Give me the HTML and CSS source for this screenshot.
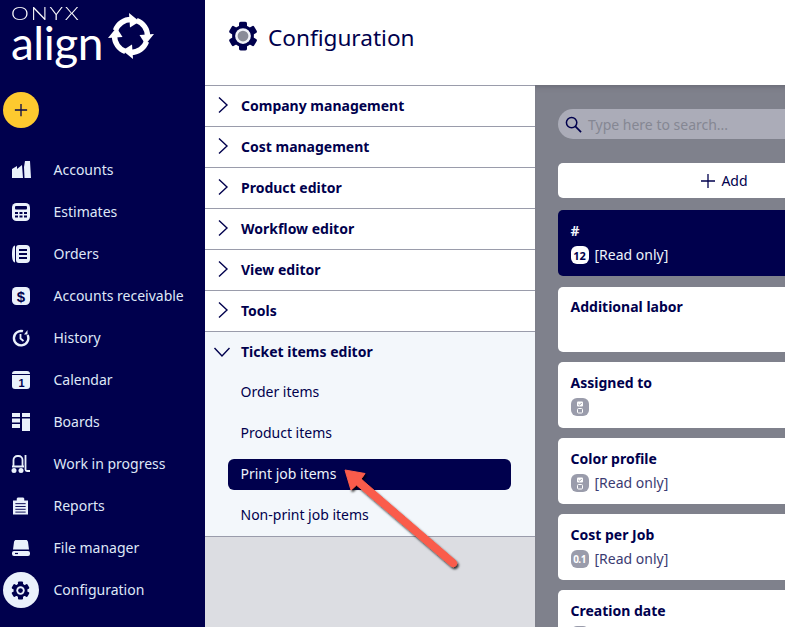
FILE: index.html
```html
<!DOCTYPE html>
<html lang="en">
<head>
<meta charset="utf-8">
<title>Configuration</title>
<link rel="stylesheet" href="styles.css">
</head>
<body>
<svg class="defs" width="0" height="0" aria-hidden="true">
  <defs>
    <g id="gear-body">
      <circle cx="12" cy="12" r="8.700"/>
      <rect x="8.800" y="0.500" width="6.400" height="6" rx="1.300"/>
      <rect x="8.800" y="0.500" width="6.400" height="6" rx="1.300" transform="rotate(60 12 12)"/>
      <rect x="8.800" y="0.500" width="6.400" height="6" rx="1.300" transform="rotate(120 12 12)"/>
      <rect x="8.800" y="0.500" width="6.400" height="6" rx="1.300" transform="rotate(180 12 12)"/>
      <rect x="8.800" y="0.500" width="6.400" height="6" rx="1.300" transform="rotate(240 12 12)"/>
      <rect x="8.800" y="0.500" width="6.400" height="6" rx="1.300" transform="rotate(300 12 12)"/>
    </g>
    <g id="ring-seg">
      <path d="M7.500 17.360A16.500 16.500 0 0 1 23 6.500" fill="none" stroke="#fff" stroke-width="5.400"/>
      <path d="M21 0L31.500 8.500L22 14.500Z" fill="#fff"/>
    </g>
    <g id="check-box">
      <rect x="6" y="3.500" width="6" height="5" rx="1" fill="#fff"/>
      <path d="M7.300 6l1.200 1.200L10.700 5" fill="none" stroke="#9a9cab"/>
      <rect x="6.500" y="10.500" width="5" height="4.500" rx="1" fill="none" stroke="#fff"/>
    </g>
    <filter id="sh" x="-20%" y="-20%" width="140%" height="140%"><feDropShadow dx="1.500" dy="2" stdDeviation="1.300" flood-color="#000" flood-opacity=".8"/></filter>
  </defs>
</svg>
<div class="app">
  <aside class="sidebar">
    <div class="logo">
      <div class="logo-text">
        <div class="onyx">ONYX</div>
        <div class="align">align</div>
      </div>
      <svg class="logo-mark" viewBox="0 0 46 46" width="46" height="46">
        <use href="#ring-seg"/>
        <use href="#ring-seg" transform="rotate(90 23 23)"/>
        <use href="#ring-seg" transform="rotate(180 23 23)"/>
        <use href="#ring-seg" transform="rotate(270 23 23)"/>
      </svg>
    </div>
    <button class="fab" aria-label="New">
      <svg viewBox="0 0 16 16" width="14" height="14"><path d="M8 1v14M1 8h14" stroke="#0a0a4a" stroke-width="1.500" fill="none"/></svg>
    </button>
    <nav class="nav">
      <a class="nav-item"><span class="nav-icon"><svg viewBox="0 0 20 18" width="20" height="18"><path fill="#eaf1fb" d="M1 8l5-3v3l5-4 1 13H1zM13 6l1-6h5l1 17h-6.500z"/></svg></span>Accounts</a>
      <a class="nav-item"><span class="nav-icon"><svg viewBox="0 0 18 18" width="18" height="18"><rect x="0" y="0" width="18" height="18" rx="4.500" fill="#eaf1fb"/><rect x="3" y="3" width="12" height="3.500" rx="1" fill="#00004d"/><path fill="#00004d" d="M3 9h3v2H3zM7.500 9h3v2h-3zM12 9h3v2h-3zM3 12.500h3v2H3zM7.500 12.500h3v2h-3zM12 12.500h3v2h-3z"/></svg></span>Estimates</a>
      <a class="nav-item"><span class="nav-icon"><svg viewBox="0 0 18 18" width="18" height="18"><path fill="#eaf1fb" d="M3 0.500v17C1 17 0 15 0 9s1-8 3-8.500zM7 0h7a4 4 0 0 1 4 4v10a4 4 0 0 1-4 4H7a3 3 0 0 1-3-3V3a3 3 0 0 1 3-3z"/><path stroke="#00004d" stroke-width="1.800" d="M7 5h8M7 9h8M7 13h8" fill="none"/></svg></span>Orders</a>
      <a class="nav-item"><span class="nav-icon"><svg viewBox="0 0 18 18" width="18" height="18"><rect width="18" height="18" rx="4.500" fill="#eaf1fb"/><text class="dollar" x="9" y="14.500" text-anchor="middle">$</text></svg></span>Accounts receivable</a>
      <a class="nav-item"><span class="nav-icon"><svg viewBox="0 0 18 18" width="18" height="18"><path d="M11 2.200A7.200 7.200 0 1 0 15.600 6" fill="none" stroke="#eaf1fb" stroke-width="2.400"/><path d="M8.500 5v4.500l3 2.500" fill="none" stroke="#eaf1fb" stroke-width="1.800"/><path d="M15.500 1v4.500h-3.500z" fill="#eaf1fb"/></svg></span>History</a>
      <a class="nav-item"><span class="nav-icon"><svg viewBox="0 0 18 18" width="18" height="18"><path d="M3 0h12a3 3 0 0 1 3 3H0a3 3 0 0 1 3-3z" fill="#eaf1fb"/><path d="M0 4h18v11a3 3 0 0 1-3 3H3a3 3 0 0 1-3-3z" fill="#eaf1fb"/><text class="cal" x="9.500" y="16" text-anchor="middle">1</text></svg></span>Calendar</a>
      <a class="nav-item"><span class="nav-icon"><svg viewBox="0 0 18 18" width="18" height="18"><path fill="#eaf1fb" d="M0 0h8v4H0zM0 5.500h8v4H0zM0 11h8v4H0zM10 0h8v4h-8zM10 5.500h8V18h-8z"/></svg></span>Boards</a>
      <a class="nav-item"><span class="nav-icon"><svg viewBox="0 0 19 18" width="19" height="18"><circle cx="3" cy="15.500" r="2.500" fill="#eaf1fb"/><circle cx="10" cy="15.500" r="2.500" fill="#eaf1fb"/><path d="M2.500 11V5a4 4 0 0 1 4-4h1a4 4 0 0 1 4 4v7M1 11.500h12" fill="none" stroke="#eaf1fb" stroke-width="1.800"/><path d="M14.500 0v14.500c0 1 .5 1.500 1.500 1.500h3" fill="none" stroke="#eaf1fb" stroke-width="1.800"/></svg></span>Work in progress</a>
      <a class="nav-item"><span class="nav-icon"><svg viewBox="0 0 16 18" width="15" height="18"><path fill="#eaf1fb" d="M0 3h4V1l1-1h6l1 1v2h4v15H0z"/><path stroke="#00004d" fill="none" d="M2.500 6.500h11M2.500 9.500h11M2.500 12.500h11M2.500 15.500h11"/></svg></span>Reports</a>
      <a class="nav-item"><span class="nav-icon"><svg viewBox="0 0 18 18" width="18" height="18"><path fill="#eaf1fb" d="M4 1h10c1 0 1.500.5 2 2l1 7.500H1L2 3c.5-1.500 1-2 2-2zM2 12h14a2 2 0 0 1 2 2v1a2 2 0 0 1-2 2H2a2 2 0 0 1-2-2v-1a2 2 0 0 1 2-2z"/><path stroke="#00004d" stroke-width="1.200" d="M3 14.500h3"/></svg></span>File manager</a>
      <a class="nav-item"><span class="nav-icon nav-icon-active"><svg class="gear" viewBox="0 0 24 24" width="19" height="19"><use href="#gear-body"/><circle cx="12" cy="12" r="5.300" fill="#eaf1fb"/><circle cx="12" cy="12" r="3" fill="#00004d"/></svg></span>Configuration</a>
    </nav>
  </aside>
  <div class="main">
    <header class="page-header">
      <svg class="gear" viewBox="0 0 24 24" width="30" height="30"><use href="#gear-body"/><circle cx="12" cy="12" r="6.300" fill="#f0f2f7"/><circle cx="12" cy="12" r="4.300" fill="#8a8c98"/></svg>
      <h1 class="title">Configuration</h1>
    </header>
    <div class="content">
      <section class="menu">
        <div class="group"><svg class="chev" viewBox="0 0 12 18" width="12" height="18"><path d="M2 1.500l8 7.500-8 7.500"/></svg>Company management</div>
        <div class="group"><svg class="chev" viewBox="0 0 12 18" width="12" height="18"><path d="M2 1.500l8 7.500-8 7.500"/></svg>Cost management</div>
        <div class="group"><svg class="chev" viewBox="0 0 12 18" width="12" height="18"><path d="M2 1.500l8 7.500-8 7.500"/></svg>Product editor</div>
        <div class="group"><svg class="chev" viewBox="0 0 12 18" width="12" height="18"><path d="M2 1.500l8 7.500-8 7.500"/></svg>Workflow editor</div>
        <div class="group"><svg class="chev" viewBox="0 0 12 18" width="12" height="18"><path d="M2 1.500l8 7.500-8 7.500"/></svg>View editor</div>
        <div class="group"><svg class="chev" viewBox="0 0 12 18" width="12" height="18"><path d="M2 1.500l8 7.500-8 7.500"/></svg>Tools</div>
        <div class="expanded">
          <div class="group group-open"><svg class="chev chev-open" viewBox="0 0 18 12" width="18" height="12"><path d="M1.500 2l7.500 8 7.500-8"/></svg>Ticket items editor</div>
          <a class="sub">Order items</a>
          <a class="sub">Product items</a>
          <a class="sub sub-active">Print job items</a>
          <a class="sub">Non-print job items</a>
        </div>
      </section>
      <section class="fields">
        <div class="search">
          <svg viewBox="0 0 18 18" width="17" height="17"><circle cx="7" cy="7" r="5.500" fill="none" stroke="#00004d" stroke-width="1.600"/><path d="M11 11l6 6" stroke="#00004d" stroke-width="1.800"/></svg>
          <span>Type here to search...</span>
        </div>
        <button class="add"><svg viewBox="0 0 14 14" width="14" height="14"><path d="M7 0v14M0 7h14" stroke="#00004d" stroke-width="1.300" fill="none"/></svg>Add</button>
        <div class="card card-dark card-first">
          <div class="card-title">#</div>
          <div class="card-meta"><span class="badge badge-light">12</span><span class="meta-text">[Read only]</span></div>
        </div>
        <div class="card card-labor">
          <div class="card-title">Additional labor</div>
        </div>
        <div class="card">
          <div class="card-title">Assigned to</div>
          <div class="card-meta"><span class="badge"><svg viewBox="0 0 18 18" width="18" height="18"><use href="#check-box"/></svg></span></div>
        </div>
        <div class="card">
          <div class="card-title">Color profile</div>
          <div class="card-meta"><span class="badge"><svg viewBox="0 0 18 18" width="18" height="18"><use href="#check-box"/></svg></span><span class="meta-text">[Read only]</span></div>
        </div>
        <div class="card">
          <div class="card-title">Cost per Job</div>
          <div class="card-meta"><span class="badge badge-num">0.1</span><span class="meta-text">[Read only]</span></div>
        </div>
        <div class="card">
          <div class="card-title">Creation date</div>
          <div class="card-meta"><span class="badge"></span></div>
        </div>
      </section>
    </div>
  </div>
  <svg class="arrow" viewBox="0 0 130 115" width="130" height="115">
    <g filter="url(#sh)"><path d="M8 8L28 11.500L24 17L118.500 98.500Q121 101 119 103.500Q116.500 106 114 104L19.500 23L14 28Z" fill="#fa5c4b" stroke="#fa5c4b" stroke-linejoin="round"/></g>
  </svg>
</div>
</body>
</html>
```
FILE: styles.css
```css
* { box-sizing: border-box; }
html, body { margin: 0; height: 100%; overflow: hidden; }
body { font-family: "Noto Sans", "Open Sans", sans-serif; color: #00004d; background: #fff; }
.defs { position: absolute; }
.app { position: relative; display: flex; width: 785px; height: 627px; overflow: hidden; }
.sidebar { width: 205px; flex: none; background: #00004d; color: #e8eefa; display: flex; flex-direction: column; }
.logo { display: flex; align-items: flex-start; padding: 4px 0 0 11px; height: 92px; gap: 4px; }
.logo-text { color: #fff; font-family: "Lato", sans-serif; width: 93px; flex: none; }
.onyx { display: inline-block; font-size: 18px; letter-spacing: 1.500px; line-height: 16px; font-weight: 300; transform: scaleX(1.25); transform-origin: left center; }
.align { font-size: 46px; line-height: 42px; font-weight: 400; letter-spacing: -0.500px; margin-top: -1px; }
.logo-mark { margin-top: 9px; }
.fab { width: 36px; height: 36px; margin-left: 2.500px; border: 0; border-radius: 50%; background: #fdc92f; display: flex; align-items: center; justify-content: center; padding: 0; }
.nav { display: flex; flex-direction: column; margin-top: 21px; }
.nav-item { display: flex; align-items: center; height: 42px; padding-bottom: 2px; font-size: 14px; color: #dfe7f7; }
.nav-icon { width: 36px; height: 36px; margin: 2px 15px 0 2.500px; display: flex; align-items: center; justify-content: center; flex: none; }
.nav-icon-active { background: #eaf1fb; border-radius: 50%; }
.gear { fill: #00004d; }
.dollar { font: 700 15px "Liberation Sans", sans-serif; fill: #00004d; }
.cal { font: 700 11px "Liberation Sans", sans-serif; fill: #00004d; }
.main { flex: 1; min-width: 0; display: flex; flex-direction: column; }
.page-header { height: 85px; flex: none; display: flex; align-items: flex-start; gap: 10px; padding: 21px 0 0 23px; background: #fff; }
.title { margin: 1px 0 0; font-size: 22.600px; font-weight: 400; line-height: 32px; }
.content { flex: 1; display: flex; min-height: 0; }
.menu { width: 330px; flex: none; background: #dcdde2; border-top: 1px solid #9a9cab; height: 542px; }
.group { display: flex; align-items: center; height: 41px; padding: 0 0 2px 12px; gap: 12px; background: #fff; border-bottom: 1px solid #9a9cab; font-size: 14px; font-weight: 700; }
.chev { fill: none; stroke: #00004d; stroke-width: 1.400; flex: none; margin-top: -1px; }
.expanded { background: #f3f7fb; border-bottom: 1px solid #9a9cab; height: 205px; }
.group-open { background: transparent; border: 0; padding-left: 8px; gap: 8px; margin-bottom: 4px; }
.chev-open { margin-top: 1px; margin-right: 2px; }
.sub { display: flex; align-items: center; height: 31px; margin: 0 24px 10px 23px; padding: 0 0 2px 12.500px; font-size: 14px; border-radius: 6px; }
.sub-active { background: #00004d; color: #eef3fb; }
.fields { flex: 1; min-width: 0; background: #7f818c; padding: 24px 0 0 23px; overflow: hidden; box-shadow: inset 0 6px 6px -6px rgba(60,60,70,.5); }
.search { height: 30px; width: 300px; border-radius: 15px; background: #abacb8; display: flex; align-items: center; gap: 6px; padding-left: 7px; font-size: 14px; color: #858793; }
.add { display: flex; width: 333px; height: 35px; margin-top: 24px; align-items: center; justify-content: center; gap: 6px; border: 0; border-radius: 5px; background: #fff; color: #00004d; font: 400 14px "Noto Sans", sans-serif; padding: 0; }
.card { width: 333px; height: 66px; margin-top: 10px; padding: 11px 12.500px; border-radius: 5px; background: #fff; font-size: 14px; }
.card-first { margin-top: 12px; }
.card-labor { height: 65px; margin-top: 11px; padding-top: 10px; }
.card-dark { background: #00004d; color: #f0f4fb; }
.card-title { font-weight: 700; line-height: 19px; }
.card-meta { display: flex; align-items: center; gap: 6px; margin-top: 6px; height: 18px; color: #3b3b72; }
.meta-text { padding-bottom: 2px; }
.card-dark .card-meta { color: #eef3fb; }
.badge { width: 18px; height: 18px; border-radius: 6px; background: #9a9cab; color: #fff; display: flex; align-items: center; justify-content: center; font-size: 10px; font-weight: 700; flex: none; }
.badge-light { background: #fff; color: #00004d; font-size: 11px; }
.badge-num { font-size: 10px; letter-spacing: -0.500px; }
.arrow { position: absolute; left: 337px; top: 462px; }
```
